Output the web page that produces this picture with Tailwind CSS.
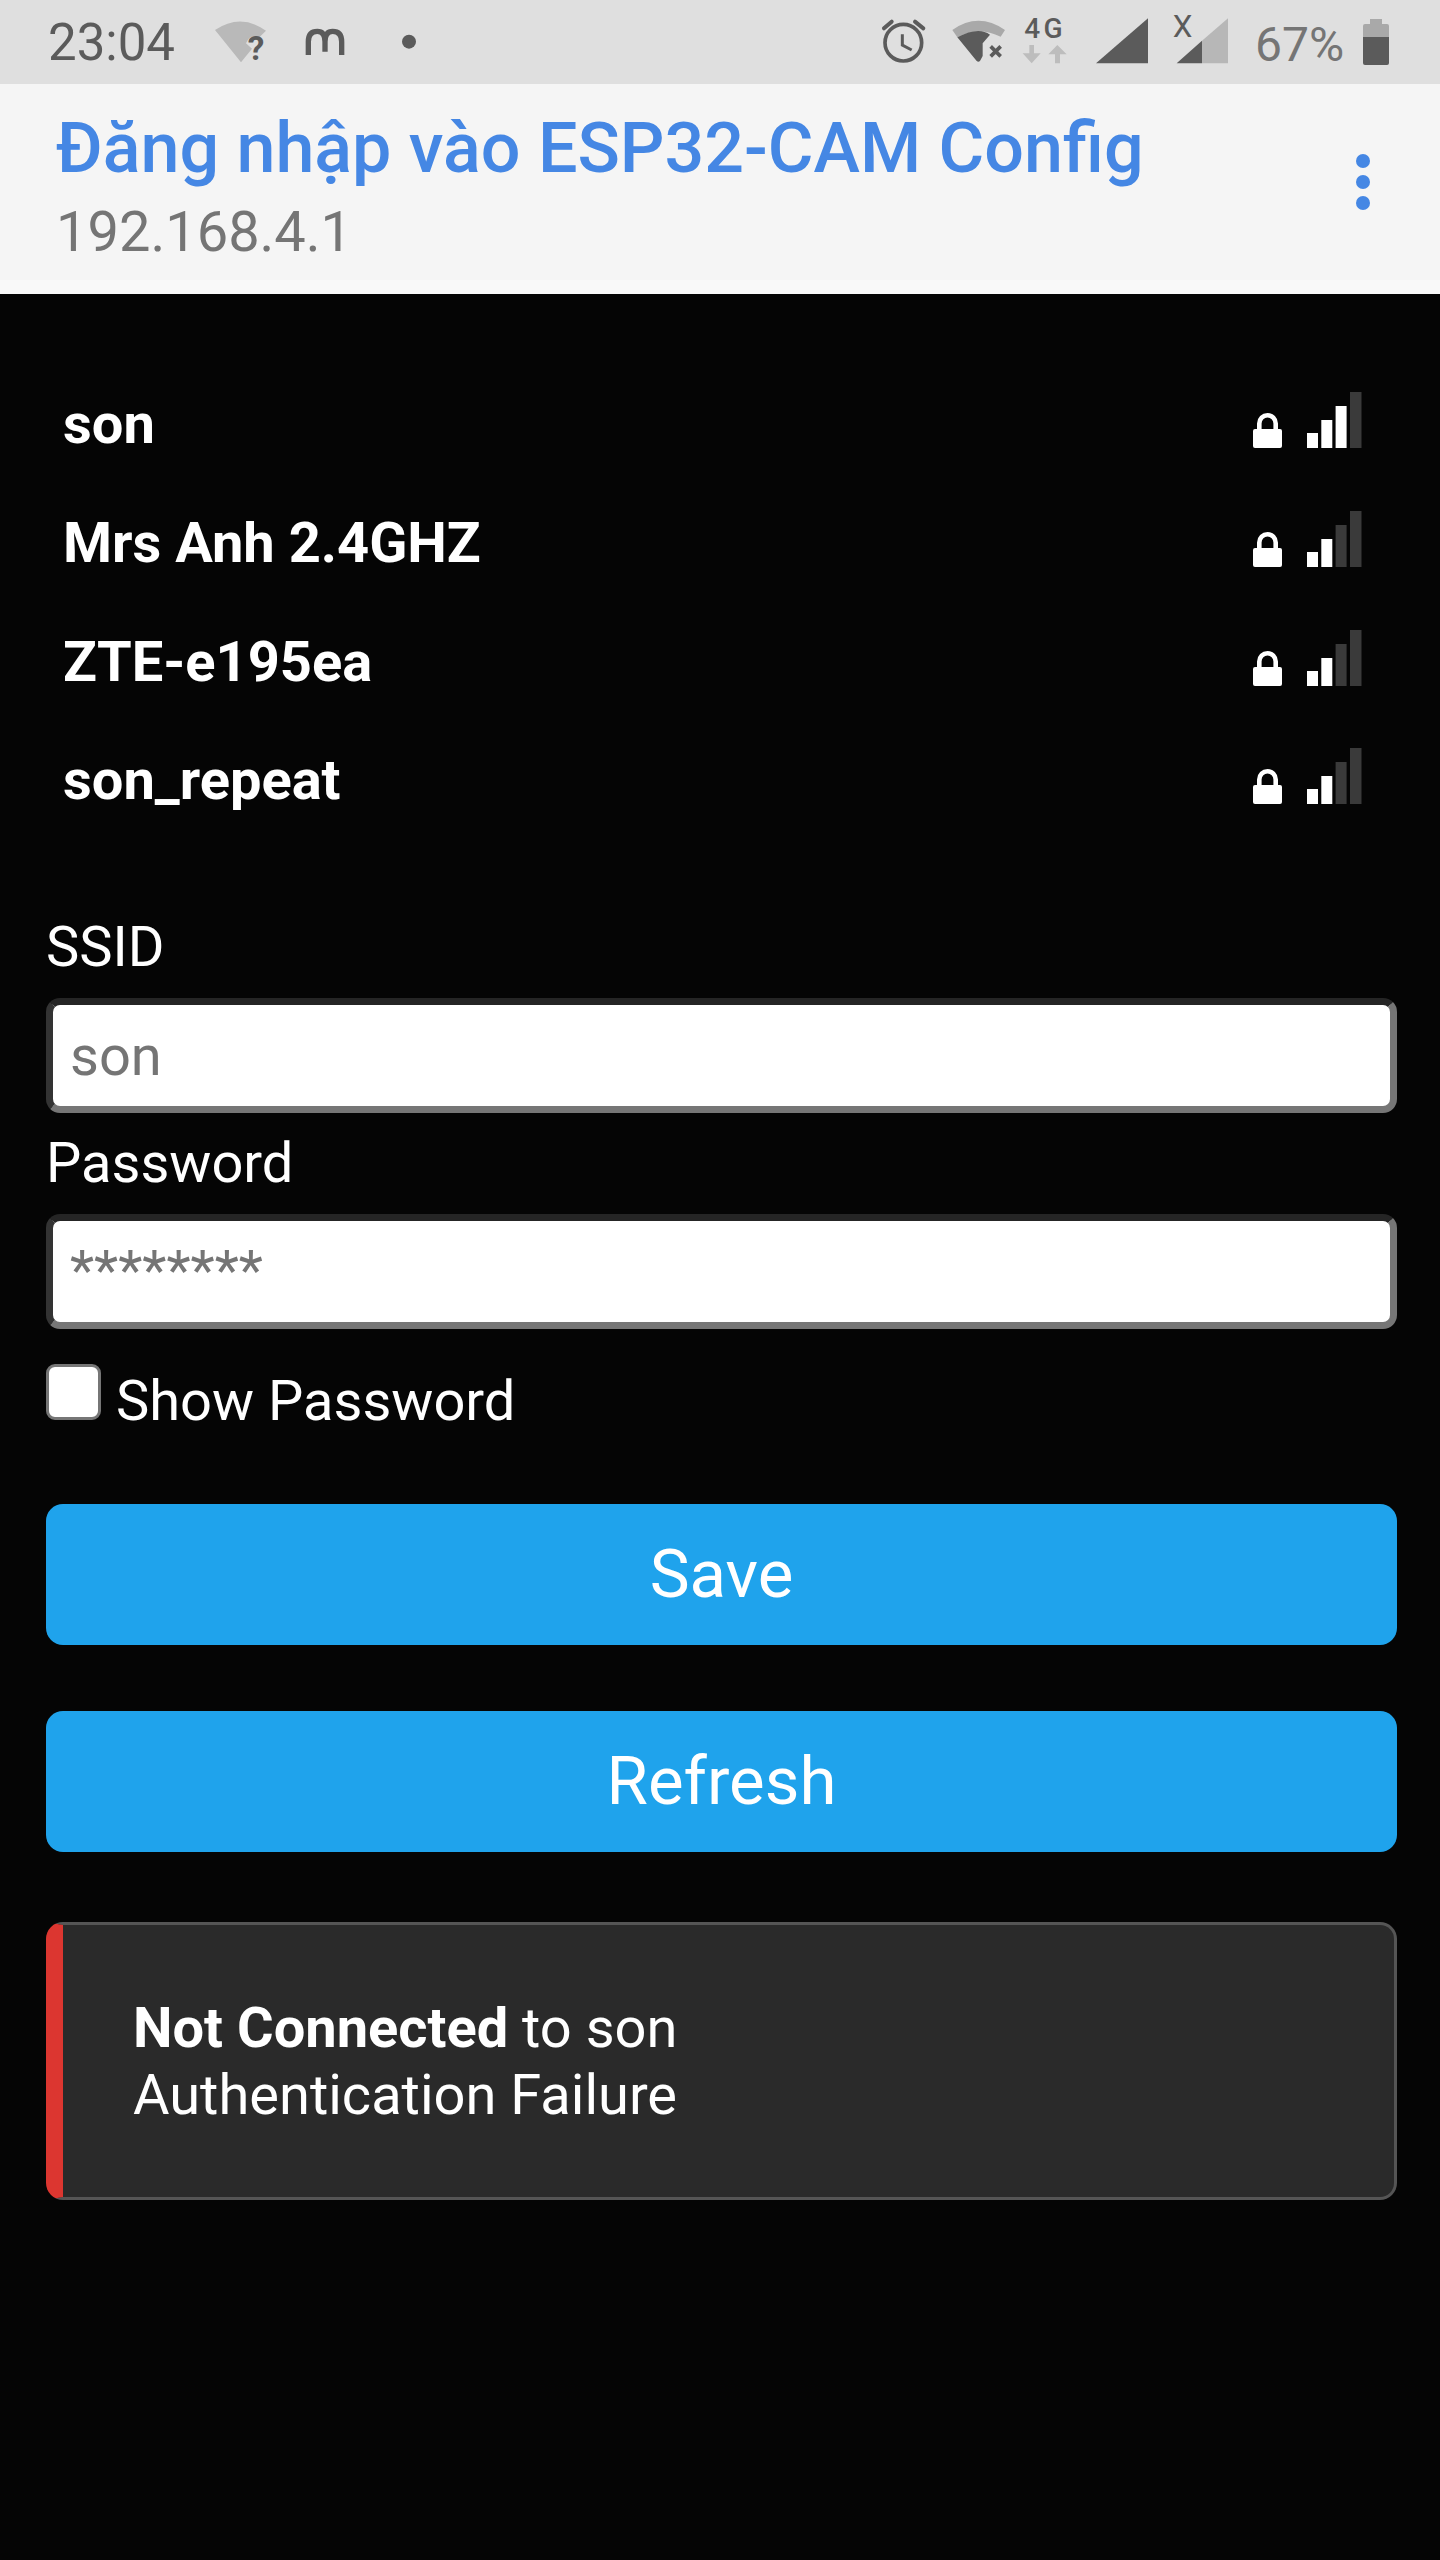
<!DOCTYPE html>
<html lang="en">
<head>
    <meta charset="UTF-8">
    <title>Đăng nhập vào ESP32-CAM Config</title>
    <script src="https://cdn.jsdelivr.net/npm/@tailwindcss/browser@4"></script>
</head>
<body class="bg-[#050505] font-['Roboto',sans-serif] text-white w-[1440px] h-[2560px] overflow-hidden">

    <!-- Status bar -->
    <div class="h-[84px] bg-[#dfdfdf] flex items-start pl-[48px]">
        <span class="w-[152px] mt-[15px] text-[51px] leading-[56px] text-[#5b5b5b] shrink-0">23:04</span>
        <!-- wifi?, m, dot -->
        <svg class="shrink-0" width="240" height="84" viewBox="0 0 720 252">
            <path d="M45 90 Q122 38 198 92 L178 112 Q150 100 138 130 L156 146 L123 187 Z" fill="#b9b9b9"/>
            <text x="143" y="180" font-family="Roboto" font-size="100" font-weight="700" fill="#5b5b5b">?</text>
            <path d="M325 165 V125 Q325 94 352 94 Q375 94 375 125 V155 M375 125 Q375 94 398 94 Q425 94 425 125 V165" fill="none" stroke="#5b5b5b" stroke-width="16"/>
            <circle cx="627" cy="125" r="21" fill="#5b5b5b"/>
        </svg>
        <!-- alarm, wifi x, 4G -->
        <svg class="shrink-0 ml-[430px]" width="220" height="84" viewBox="0 0 660 252">
            <circle cx="100" cy="128" r="55" fill="none" stroke="#5b5b5b" stroke-width="11"/>
            <path d="M42 85 L65 65 M135 65 L160 85" stroke="#5b5b5b" stroke-width="12" stroke-linecap="round"/>
            <path d="M97 103 V135 L125 150" fill="none" stroke="#5b5b5b" stroke-width="9"/>
            <path d="M247 90 Q325 35 405 90 L392 110 Q325 78 262 112 Z" fill="#a9a9a9"/>
            <path d="M262 112 Q325 78 360 104 L338 130 V168 L330 183 Q325 188 320 183 Z" fill="#5b5b5b"/>
            <path d="M362 139 L392 169 M392 139 L362 169" stroke="#5b5b5b" stroke-width="11"/>
            <text x="463" y="115" font-family="Roboto" font-size="84" font-weight="500" letter-spacing="10" fill="#5b5b5b">4G</text>
            <path d="M478 135 H492 V160 H512 L485 190 L458 160 H478 Z" fill="#bdbdbd"/>
            <path d="M562 135 L590 163 H570 V190 H555 V163 H535 Z" fill="#bdbdbd"/>
        </svg>
        <!-- signal icons -->
        <svg class="shrink-0" width="140" height="84" viewBox="0 0 420 252">
            <path d="M18 190 L174 55 V190 Z" fill="#5b5b5b"/>
            <text x="248" y="110" font-family="Roboto" font-size="94" fill="#5b5b5b">X</text>
            <path d="M336 122 L414 55 V190 H336 Z" fill="#b7b7b7"/>
            <path d="M260 190 L336 122 V190 Z" fill="#5b5b5b"/>
        </svg>
        <span class="w-[133px] pl-[25px] mt-[17px] text-[48px] leading-[56px] text-[#757575] shrink-0">67%</span>
        <!-- battery -->
        <svg class="shrink-0 mt-[19px]" width="26" height="46" viewBox="0 0 26 46">
            <rect x="7" y="0" width="12" height="8" fill="#a9a9a9"/>
            <path d="M2 5 H24 Q26 5 26 7 V19 H0 V7 Q0 5 2 5 Z" fill="#a9a9a9"/>
            <path d="M0 18 H26 V44 Q26 46 24 46 H2 Q0 46 0 44 Z" fill="#5b5b5b"/>
        </svg>
    </div>

    <!-- Browser header -->
    <header class="h-[210px] bg-[#f5f5f5] flex justify-between pl-[56px] pr-[70px] border-b-[14px] border-[#f9f9f9]">
        <div class="pt-[24px]">
            <div class="text-[70px] leading-[80px] font-medium text-[#4587e4]">Đăng nhập vào ESP32-CAM Config</div>
            <div class="mt-[12px] text-[56px] leading-[64px] text-[#757575]">192.168.4.1</div>
        </div>
        <div class="pt-[70px] flex flex-col gap-[7px]">
            <div class="w-[14px] h-[14px] rounded-full bg-[#4587e4]"></div>
            <div class="w-[14px] h-[14px] rounded-full bg-[#4587e4]"></div>
            <div class="w-[14px] h-[14px] rounded-full bg-[#4587e4]"></div>
        </div>
    </header>

    <main class="pl-[46px] pr-[43px]">
        <!-- Wifi list -->
        <div class="pt-[71px] pl-[17px] pr-[35px]">
            <div class="h-[118.7px] flex items-center justify-between font-bold text-[56px]">
                <span>son</span>
                <div class="flex items-end gap-[25px] mb-[8px]">
                    <svg width="29" height="35" viewBox="0 0 29 35"><path d="M6.3 18 V10.5 a8.2 8.2 0 0 1 16.4 0 V18" fill="none" stroke="#fff" stroke-width="4.6"/><rect y="16" width="29" height="19" rx="2" fill="#fff"/></svg>
                    <svg width="55" height="56" viewBox="0 0 55 56"><rect y="41" width="11" height="15" fill="#fff"/><rect x="14.3" y="28" width="11" height="28" fill="#fff"/><rect x="28.6" y="14" width="11" height="42" fill="#fff"/><rect x="43" y="0" width="11.5" height="56" fill="#3a3a3a"/></svg>
                </div>
            </div>
            <div class="h-[118.7px] flex items-center justify-between font-bold text-[56px]">
                <span>Mrs Anh 2.4GHZ</span>
                <div class="flex items-end gap-[25px] mb-[8px]">
                    <svg width="29" height="35" viewBox="0 0 29 35"><path d="M6.3 18 V10.5 a8.2 8.2 0 0 1 16.4 0 V18" fill="none" stroke="#fff" stroke-width="4.6"/><rect y="16" width="29" height="19" rx="2" fill="#fff"/></svg>
                    <svg width="55" height="56" viewBox="0 0 55 56"><rect y="41" width="11" height="15" fill="#fff"/><rect x="14.3" y="28" width="11" height="28" fill="#fff"/><rect x="28.6" y="14" width="11" height="42" fill="#3a3a3a"/><rect x="43" y="0" width="11.5" height="56" fill="#3a3a3a"/></svg>
                </div>
            </div>
            <div class="h-[118.7px] flex items-center justify-between font-bold text-[56px]">
                <span>ZTE-e195ea</span>
                <div class="flex items-end gap-[25px] mb-[8px]">
                    <svg width="29" height="35" viewBox="0 0 29 35"><path d="M6.3 18 V10.5 a8.2 8.2 0 0 1 16.4 0 V18" fill="none" stroke="#fff" stroke-width="4.6"/><rect y="16" width="29" height="19" rx="2" fill="#fff"/></svg>
                    <svg width="55" height="56" viewBox="0 0 55 56"><rect y="41" width="11" height="15" fill="#fff"/><rect x="14.3" y="28" width="11" height="28" fill="#fff"/><rect x="28.6" y="14" width="11" height="42" fill="#3a3a3a"/><rect x="43" y="0" width="11.5" height="56" fill="#3a3a3a"/></svg>
                </div>
            </div>
            <div class="h-[118.7px] flex items-center justify-between font-bold text-[56px]">
                <span>son_repeat</span>
                <div class="flex items-end gap-[25px] mb-[8px]">
                    <svg width="29" height="35" viewBox="0 0 29 35"><path d="M6.3 18 V10.5 a8.2 8.2 0 0 1 16.4 0 V18" fill="none" stroke="#fff" stroke-width="4.6"/><rect y="16" width="29" height="19" rx="2" fill="#fff"/></svg>
                    <svg width="55" height="56" viewBox="0 0 55 56"><rect y="41" width="11" height="15" fill="#fff"/><rect x="14.3" y="28" width="11" height="28" fill="#fff"/><rect x="28.6" y="14" width="11" height="42" fill="#3a3a3a"/><rect x="43" y="0" width="11.5" height="56" fill="#3a3a3a"/></svg>
                </div>
            </div>
        </div>

        <!-- Form -->
        <form class="mt-[75px] text-[56px] leading-[64px]">
            <label class="block">SSID</label>
            <input type="text" value="son" class="block w-full h-[115px] mt-[19px] mb-[18px] pl-[17px] pr-[18px] pt-[2px] bg-white text-[#757575] rounded-[14px] border-[7px] border-t-[#252525] border-l-[#333333] border-r-[#767676] border-b-[#767676] outline-none">
            <label class="block">Password</label>
            <input type="text" value="********" class="block w-full h-[115px] mt-[19px] pl-[17px] pr-[18px] bg-white text-[#757575] rounded-[14px] border-[7px] border-t-[#252525] border-l-[#333333] border-r-[#767676] border-b-[#767676] outline-none">
            <div class="flex items-start gap-[15px] mt-[35px]">
                <input type="checkbox" class="appearance-none block w-[55px] h-[56px] bg-white border-[3.5px] border-[#767676] rounded-[9px] shrink-0">
                <label class="mt-[5px]">Show Password</label>
            </div>
            <button type="button" class="block w-full h-[141px] mt-[71px] bg-[#1fa3ec] rounded-[17px] text-[67.2px]">Save</button>
            <button type="button" class="block w-full h-[141px] mt-[66px] bg-[#1fa3ec] rounded-[17px] text-[67.2px]">Refresh</button>
        </form>

        <!-- Message -->
        <div class="mt-[70px] h-[278px] bg-[#2a2a2a] border-[3.5px] border-[#555555] border-l-[17.5px] border-l-[#dc3630] rounded-[17px] pt-[70px] pl-[70px] text-[56px] leading-[67px]">
            <strong class="font-bold">Not Connected</strong> to son<br>Authentication Failure
        </div>
    </main>
</body>
</html>
